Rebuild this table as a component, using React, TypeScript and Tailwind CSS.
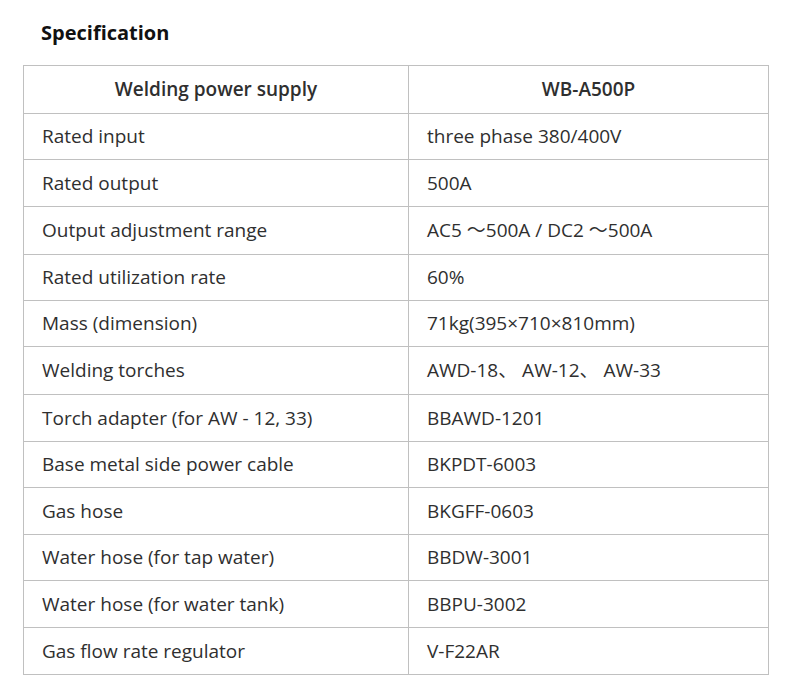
const rows: [string, string][] = [
  ["Rated input", "three phase 380/400V"],
  ["Rated output", "500A"],
  ["Output adjustment range", "AC5 ～500A / DC2 ～500A"],
  ["Rated utilization rate", "60%"],
  ["Mass (dimension)", "71kg(395×710×810mm)"],
  ["Welding torches", "AWD-18、 AW-12、 AW-33"],
  ["Torch adapter (for AW - 12, 33)", "BBAWD-1201"],
  ["Base metal side power cable", "BKPDT-6003"],
  ["Gas hose", "BKGFF-0603"],
  ["Water hose (for tap water)", "BBDW-3001"],
  ["Water hose (for water tank)", "BBPU-3002"],
  ["Gas flow rate regulator", "V-F22AR"],
];

const heights = ["h-[46px]", "h-[47px]", "h-[48px]", "h-[46px]", "h-[46px]", "h-[48px]", "h-[47px]", "h-[46px]", "h-[47px]", "h-[46px]", "h-[47px]", "h-[46px]"];

export default function App() {
  return (
    <div
      className="w-[791px] h-[696px] bg-white text-[#2f2f2f] pl-[23px] pt-[19px]"
      style={{ fontFamily: '"Open Sans", "Noto Sans CJK SC", sans-serif' }}
    >
      <h1 className="pl-[18px] text-[20px] font-bold text-[#111] leading-[28px] h-[46px]">Specification</h1>
      <div className="w-[746px] border border-[#c0c0c0]">
        <div className="flex h-[48px] border-b border-[#c0c0c0] text-[19px] font-semibold">
          <div className="w-[385px] border-r border-[#c0c0c0] flex items-center justify-center">
            Welding power supply
          </div>
          <div className="flex-1 flex items-center justify-center">WB-A500P</div>
        </div>
        {rows.map(([label, value], i) => (
          <div
            key={label}
            className={`flex text-[19px] ${heights[i]} ${i < rows.length - 1 ? "border-b border-[#c0c0c0]" : ""}`}
          >
            <div className="w-[385px] border-r border-[#c0c0c0] flex items-center pl-[18px]">{label}</div>
            <div className="flex-1 flex items-center pl-[18px]">{value}</div>
          </div>
        ))}
      </div>
    </div>
  );
}
